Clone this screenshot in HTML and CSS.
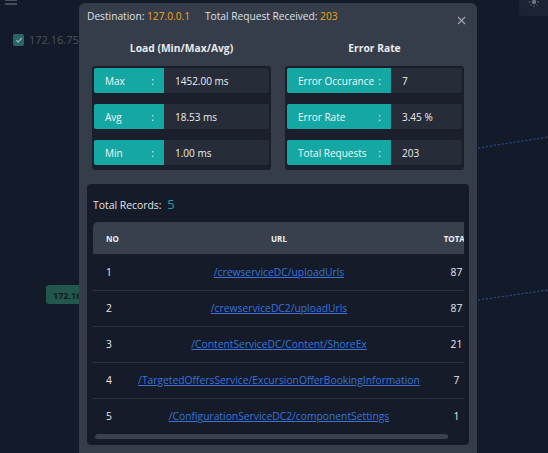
FILE: index.html
```html
<!DOCTYPE html>
<html lang="en">
    <head>
        <meta charset="UTF-8">
        <meta name="viewport" content="width=device-width, initial-scale=1.0">
        <title>Request Details</title>
        <link rel="stylesheet" href="styles.css">
    </head>
    <body>
        <div class="backdrop">
            <div class="topbar">
                <span class="burger"></span>
                <span class="corner-btn">
                    <svg width="10" height="10" viewBox="0 0 10 10">
                        <circle cx="5" cy="5" r="2.2" fill="#6b7280"/>
                        <g stroke="#6b7280" stroke-width="1">
                            <line x1="5" y1="0" x2="5" y2="1.5"/>
                            <line x1="5" y1="8.5" x2="5" y2="10"/>
                            <line x1="0" y1="5" x2="1.5" y2="5"/>
                            <line x1="8.5" y1="5" x2="10" y2="5"/>
                            <line x1="1.5" y1="1.5" x2="2.5" y2="2.5"/>
                            <line x1="7.5" y1="7.5" x2="8.5" y2="8.5"/>
                            <line x1="8.5" y1="1.5" x2="7.5" y2="2.5"/>
                            <line x1="1.5" y1="8.5" x2="2.5" y2="7.5"/>
                        </g>
                    </svg>
                </span>
            </div>
            <div class="host-row">
                <span class="check">
                    <svg width="8" height="8" viewBox="0 0 8 8"><path d="M1.2 4.2 L3.2 6 L6.8 2" fill="none" stroke="#8fb8b4" stroke-width="1.2"/></svg>
                </span>
                <span class="host">172.16.75.12</span>
            </div>
            <!-- graph behind the dialog -->
            <svg class="edges" width="548" height="453">
                <line x1="478" y1="148" x2="548" y2="137" stroke="#2c4f8c" stroke-width="1.2" stroke-dasharray="2 2"/>
                <line x1="478" y1="300" x2="548" y2="290" stroke="#2c4f8c" stroke-width="1.2" stroke-dasharray="2 2"/>
            </svg>
            <div class="node">172.16</div>
        </div>

        <div class="modal">
            <div class="modal-head">
                <span>Destination: <b class="hl">127.0.0.1</b></span>
                <span>Total Request Received: <b class="hl">203</b></span>
                <button class="close">
                    <svg width="9" height="9" viewBox="0 0 9 9"><path d="M1 1 L8 8 M8 1 L1 8" stroke="#a3a9b3" stroke-width="1.1"/></svg>
                </button>
            </div>

            <div class="stats">
                <div class="stat-col">
                    <div class="stat-title">Load (Min/Max/Avg)</div>
                    <div class="panel">
                        <div class="row"><span class="lbl load"><span>Max</span><span>:</span></span><span class="val">1452.00 ms</span></div>
                        <div class="row"><span class="lbl load"><span>Avg</span><span>:</span></span><span class="val">18.53 ms</span></div>
                        <div class="row"><span class="lbl load"><span>Min</span><span>:</span></span><span class="val">1.00 ms</span></div>
                    </div>
                </div>
                <div class="stat-col">
                    <div class="stat-title">Error Rate</div>
                    <div class="panel">
                        <div class="row"><span class="lbl err"><span>Error Occurance</span><span>:</span></span><span class="val">7</span></div>
                        <div class="row"><span class="lbl err"><span>Error Rate</span><span>:</span></span><span class="val">3.45 %</span></div>
                        <div class="row"><span class="lbl err"><span>Total Requests</span><span>:</span></span><span class="val">203</span></div>
                    </div>
                </div>
            </div>

            <div class="records">
                <div class="rec-title">Total Records: <span class="count">5</span></div>
                <div class="scroll">
                    <table class="grid">
                        <thead>
                            <tr><th class="c-no">NO</th><th class="c-url">URL</th><th class="c-tot">TOTAL</th></tr>
                        </thead>
                        <tbody>
                            <tr><td class="c-no">1</td><td class="c-url"><a href="#">/crewserviceDC/uploadUrls</a></td><td class="c-tot">87</td></tr>
                            <tr><td class="c-no">2</td><td class="c-url"><a href="#">/crewserviceDC2/uploadUrls</a></td><td class="c-tot">87</td></tr>
                            <tr><td class="c-no">3</td><td class="c-url"><a href="#">/ContentServiceDC/Content/ShoreEx</a></td><td class="c-tot">21</td></tr>
                            <tr><td class="c-no">4</td><td class="c-url"><a href="#">/TargetedOffersService/ExcursionOfferBookingInformation</a></td><td class="c-tot">7</td></tr>
                            <tr><td class="c-no">5</td><td class="c-url"><a href="#">/ConfigurationServiceDC2/componentSettings</a></td><td class="c-tot">1</td></tr>
                        </tbody>
                    </table>
                </div>
                <div class="hbar"></div>
            </div>
        </div>
    </body>
</html>
```

FILE: styles.css
```css
*{
    margin: 0;
    padding: 0;
    box-sizing: border-box;
}
body{
    width: 548px;
    height: 453px;
    overflow: hidden;
    background-color: #131a29;
    font-family: "Open Sans", "Liberation Sans", sans-serif;
    color: #e4e6ea;
    position: relative;
}
.backdrop{
    height: 100%;
    position: relative;
}
.topbar{
    display: flex;
    justify-content: space-between;
    height: 16px;
}
.burger{
    display: block;
    width: 12px;
    height: 6px;
    margin: -1px 0 0 5px;
    border-top: 2px solid #464d5b;
    border-bottom: 2px solid #464d5b;
}
.corner-btn{
    display: flex;
    justify-content: center;
    width: 29px;
    height: 16px;
    background-color: #1c2333;
    border-radius: 0 0 0 3px;
}
.corner-btn svg{
    margin-top: -3px;
}
.host-row{
    display: flex;
    align-items: center;
    gap: 5px;
    padding: 16px 0 0 13px;
}
.check{
    display: flex;
    align-items: center;
    justify-content: center;
    width: 11px;
    height: 12px;
    border-radius: 2px;
    background-color: #2b6466;
}
.host{
    font-size: 11px;
    color: #4a5262;
}
.edges{
    position: absolute;
    left: 0;
    top: 0;
}
.node{
    position: absolute;
    left: 46px;
    top: 285px;
    width: 60px;
    height: 19px;
    padding: 4px 0 0 7px;
    border-radius: 3px;
    background-color: #21574d;
    color: #0f1d1e;
    font-size: 9px;
    font-weight: 700;
}

.modal{
    position: absolute;
    left: 79px;
    top: 3px;
    width: 398px;
    height: 470px;
    background-color: #363d4a;
    border-radius: 6px;
}
.modal-head{
    display: flex;
    gap: 15px;
    padding: 6px 8px 0 8px;
    font-size: 10.2px;
    line-height: 14px;
    font-weight: 500;
    color: #dfe1e5;
}
.hl{
    color: #f2a516;
    font-weight: 500;
}
.close{
    position: absolute;
    right: 11px;
    top: 13px;
    background: none;
    border: 0;
    display: flex;
}

.stats{
    display: grid;
    grid-template-columns: 1fr 1fr;
    gap: 14px;
    padding: 0 13px;
    margin-top: 18px;
}
.stat-title{
    text-align: center;
    font-size: 10.3px;
    line-height: 14px;
    font-weight: 700;
    color: #e8eaee;
    margin-bottom: 11px;
}
.panel{
    display: flex;
    flex-direction: column;
    gap: 11px;
    padding: 2px 2px 5px 2px;
    background-color: #1a1f2b;
    border-radius: 3px;
}
.row{
    display: flex;
    height: 25px;
    background-color: #262c38;
    border-radius: 2px;
    font-size: 10px;
}
.lbl{
    display: flex;
    justify-content: space-between;
    align-items: center;
    white-space: nowrap;
    background-color: #14a7a4;
    color: #f4f7f8;
    border-radius: 2px 0 0 2px;
}
.lbl.load{
    width: 70px;
    padding: 0 10px 0 11px;
}
.lbl.err{
    width: 104px;
    padding: 0 10px 0 11px;
}
.val{
    display: flex;
    align-items: center;
    padding-left: 11px;
    color: #eceef1;
}

.records{
    margin: 14px 8px 0 8px;
    padding: 12px 5px 6px 6px;
    background-color: #151b29;
    border-radius: 4px;
}
.rec-title{
    font-size: 10.4px;
    line-height: 16px;
    color: #e2e4e8;
    margin-bottom: 9px;
}
.count{
    font-size: 13px;
    color: #1aa3ae;
    margin-left: 3px;
}
.scroll{
    overflow: hidden;
}
.hbar{
    height: 5px;
    margin: 0 16px 0 2px;
    background-color: #3a4150;
    border-radius: 3px;
}
.grid{
    width: 390px;
    table-layout: fixed;
    border-collapse: collapse;
}
.grid th{
    height: 32px;
    background-color: #383f4d;
    font-size: 8px;
    font-weight: 700;
    color: #eef0f3;
}
.grid th:first-child{
    border-top-left-radius: 5px;
}
.grid td{
    height: 36px;
    font-size: 10.3px;
    color: #e6e8eb;
    border-bottom: 1px solid #2b3240;
}
.grid tr:last-child td{
    border-bottom: 0;
}
.c-no{
    width: 35px;
    text-align: left;
    padding-left: 13px;
}
.c-url{
    width: 302px;
    text-align: center;
    white-space: nowrap;
}
.c-tot{
    width: 53px;
    text-align: center;
}
.grid a{
    color: #3674dc;
}
```
